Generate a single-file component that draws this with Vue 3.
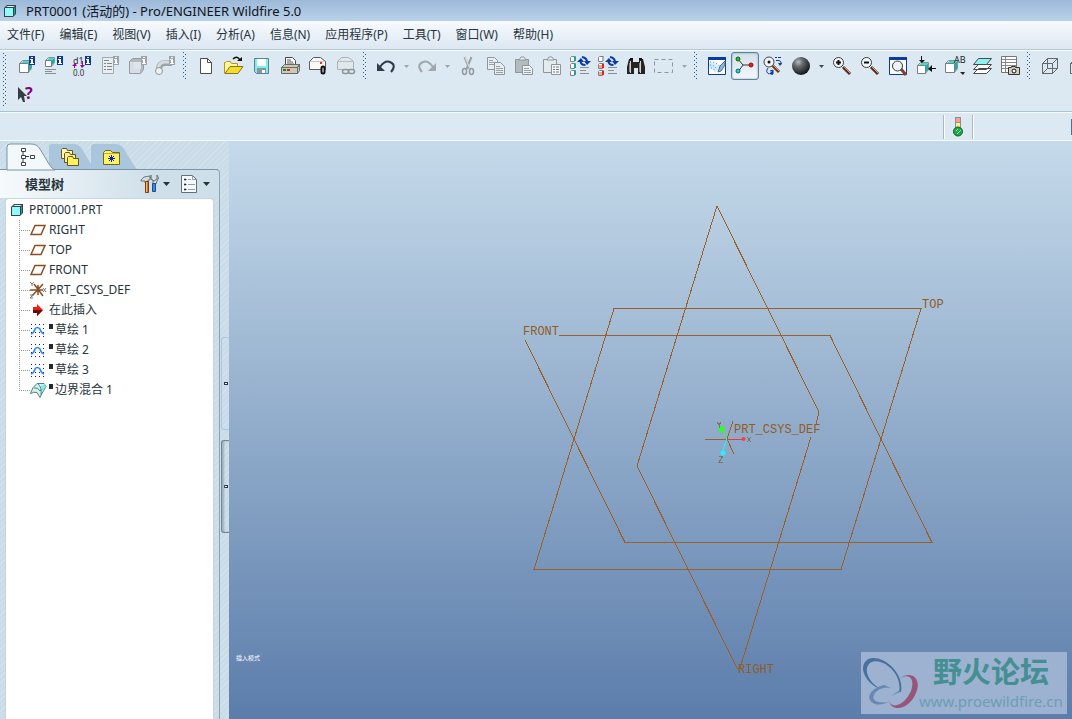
<template>
  <div class="app-window">
    <header class="title-bar">
      <svg class="title-icon" width="16" height="16" viewBox="0 0 16 16" v-html="icons.part"></svg>
      <h1>PRT0001 (活动的) - Pro/ENGINEER Wildfire 5.0</h1>
    </header>

    <nav class="menu-bar">
      <button v-for="item in menus" :key="item" type="button">{{ item }}</button>
    </nav>

    <div class="toolbars">
      <span class="grip"></span>
      <div class="toolbar-rows">
        <div class="toolbar-row">
          <template v-for="(group, index) in groups" :key="index">
            <span v-if="index > 0" class="grip short"></span>
            <template v-for="tool in group" :key="tool.icon">
              <button
                type="button"
                class="tool"
                :class="{ pressed: pressed === tool.icon }"
                :disabled="tool.off"
                :aria-label="tool.label"
              >
                <svg width="24" height="24" viewBox="0 0 24 24" v-html="icons[tool.icon]"></svg>
              </button>
              <button
                v-if="tool.drop"
                type="button"
                class="drop"
                :disabled="tool.off || tool.drop === 'off'"
                :aria-label="tool.label + '选项'"
              >
                <svg width="5" height="3" viewBox="0 0 5 3"><path d="M0 0h5L2.500 3z" fill="currentColor" /></svg>
              </button>
            </template>
          </template>
        </div>
        <div class="toolbar-row">
          <button type="button" class="tool" aria-label="上下文帮助">
            <svg width="24" height="24" viewBox="0 0 24 24" v-html="icons.help"></svg>
          </button>
        </div>
      </div>
    </div>

    <div class="message-bar">
      <div class="message-area"></div>
      <div class="signal">
        <svg width="12" height="20" viewBox="0 0 12 20">
          <path d="M3 0h6v13H3z" fill="#8f8f8f" />
          <path d="M4 1h4v4H4z" fill="#ff9c9c" />
          <path d="M4 6h4v4H4z" fill="#fff27a" />
          <circle cx="6" cy="14.500" r="4.500" fill="#1fa64a" stroke="#145c2b" />
          <path d="M4 14l2-2M5 17l4-4" stroke="#9be0a5" />
        </svg>
      </div>
      <div class="filter"></div>
    </div>

    <main class="workspace">
      <aside class="navigator">
        <div class="navigator-main">
          <div class="tabs" role="tablist">
            <button
              v-for="tab in tabs"
              :key="tab.icon"
              type="button"
              role="tab"
              class="tab"
              :class="{ active: activeTab === tab.icon }"
              :aria-selected="activeTab === tab.icon"
              :aria-label="tab.label"
              @click="activeTab = tab.icon"
            >
              <svg class="tab-shape" width="48" height="25" viewBox="0 0 48 25">
                <path d="M0 26V3q0-3 3-3h21q6 0 9 5l9 15q3 5 6 6z" />
              </svg>
              <svg class="tab-icon" width="20" height="20" viewBox="0 0 20 20" v-html="icons[tab.icon]"></svg>
            </button>
          </div>
          <section class="tree-panel">
            <div class="tree-header">
              <h2>模型树</h2>
              <button type="button" class="tree-tool" aria-label="设置">
                <svg width="20" height="20" viewBox="0 0 20 20" v-html="icons.settings"></svg>
                <svg width="7" height="4" viewBox="0 0 7 4"><path d="M0 0h7L3.500 4z" fill="#26343f" /></svg>
              </button>
              <button type="button" class="tree-tool" aria-label="显示">
                <svg width="20" height="20" viewBox="0 0 20 20" v-html="icons.show"></svg>
                <svg width="7" height="4" viewBox="0 0 7 4"><path d="M0 0h7L3.500 4z" fill="#26343f" /></svg>
              </button>
            </div>
            <div class="tree">
              <div class="tree-root">
                <svg width="16" height="16" viewBox="0 0 16 16" v-html="icons.part"></svg>
                <span>PRT0001.PRT</span>
              </div>
              <ul>
                <li v-for="node in nodes" :key="node.name">
                  <svg width="18" height="18" viewBox="0 0 18 18" v-html="icons[node.icon]"></svg>
                  <i v-if="node.mark" class="mark"></i>
                  <span>{{ node.name }}</span>
                </li>
              </ul>
            </div>
          </section>
        </div>
        <div class="sashes">
          <button type="button" class="sash" aria-label="展开"></button>
          <button type="button" class="sash raised" aria-label="收起"></button>
        </div>
      </aside>

      <section class="viewport">
        <svg class="model" viewBox="0 0 843 578">
          <g class="planes">
            <path d="M385 167.500H692L612 428.500H305z" />
            <path d="M330 194.500H601L703 401.500H396L296 199" />
            <path d="M582 296L511 527H508L408 325L488 65L590 271L587 283" />
            <path d="M476 298.500h22M498 298l6-18M498 298l7 15" />
          </g>
          <path d="M498 298.500h17" stroke="#ff3038" />
          <path d="M498 298l-5-10" stroke="#2bff2b" />
          <path d="M498 298l-5 14" stroke="#22f4ff" />
          <g class="axis-ends">
            <circle cx="514.500" cy="298" r="2" fill="#f04048" />
            <circle cx="492.500" cy="288" r="3" fill="#2bff2b" />
            <circle cx="494" cy="312" r="2.500" fill="#22f4ff" />
          </g>
          <path d="M518 296l4 5m0-5l-4 5M488 281l2 3 2-3M490 284v3M490 315h4l-4 6h4" class="axis-name" />
          <g class="labels">
            <text x="294" y="194">FRONT</text>
            <text x="693" y="167">TOP</text>
            <text x="505" y="292">PRT_CSYS_DEF</text>
            <text x="509" y="532">RIGHT</text>
          </g>
        </svg>
        <p class="mode">插入模式</p>
        <div class="watermark">
          <svg width="58" height="58" viewBox="0 0 58 58">
            <path d="M40 38C44 16 17-2 6 6C-5 15 9 33 20 35C7 28 2 15 9 9C19 2 42 18 38 38z" fill="#49719f" />
            <path d="M39 24C51 16 61 25 55 39C49 54 31 61 27 45C31 58 45 49 50 37C54 25 49 19 39 24z" fill="#975577" />
            <path d="M23 31C10 34 4 44 12 49C16 52 24 50 27 48C17 50 10 46 13 41C16 35 22 33 30 34z" fill="#6788b1" />
            <path d="M39 36L30 42L39 38z" fill="#6788b1" />
          </svg>
          <div class="watermark-text">
            <strong>野火论坛</strong>
            <span>www.proewildfire.cn</span>
          </div>
        </div>
      </section>
    </main>
  </div>
</template>

<script setup>
import { ref } from 'vue'

const menus = [
  '文件(F)', '编辑(E)', '视图(V)', '插入(I)', '分析(A)',
  '信息(N)', '应用程序(P)', '工具(T)', '窗口(W)', '帮助(H)',
]

const pressed = ref('spin')
const activeTab = ref('tabTree')

const groups = [
  [
    { icon: 'partInfo', label: '模型信息' },
    { icon: 'featInfo', label: '特征信息' },
    { icon: 'dims', label: '切换尺寸' },
    { icon: 'listInfo', label: '特征列表', off: true },
    { icon: 'shellInfo', label: '元件信息', off: true },
    { icon: 'pipeInfo', label: '管道信息', off: true },
  ],
  [
    { icon: 'file', label: '新建' },
    { icon: 'open', label: '打开' },
    { icon: 'save', label: '保存' },
    { icon: 'print', label: '打印' },
    { icon: 'mail', label: '发送邮件' },
    { icon: 'mailLink', label: '发送链接', off: true },
  ],
  [
    { icon: 'undo', label: '撤消', drop: 'off' },
    { icon: 'redo', label: '重做', drop: 'off', off: true },
    { icon: 'cut', label: '剪切', off: true },
    { icon: 'copy', label: '复制', off: true },
    { icon: 'paste', label: '粘贴', off: true },
    { icon: 'pasteSpecial', label: '选择性粘贴', off: true },
    { icon: 'regen', label: '再生' },
    { icon: 'regenList', label: '再生管理器' },
    { icon: 'find', label: '查找' },
    { icon: 'select', label: '选取框', drop: 'off' },
  ],
  [
    { icon: 'repaint', label: '重画' },
    { icon: 'spin', label: '旋转中心' },
    { icon: 'orient', label: '定向模式' },
    { icon: 'shade', label: '外观库', drop: 'on' },
    { icon: 'zoomIn', label: '放大' },
    { icon: 'zoomOut', label: '缩小' },
    { icon: 'refit', label: '重新调整' },
    { icon: 'reorient', label: '重定向' },
    { icon: 'views', label: '已命名的视图' },
    { icon: 'layers', label: '层' },
    { icon: 'viewManager', label: '视图管理器' },
  ],
  [
    { icon: 'wireframe', label: '线框' },
    { icon: 'hidden', label: '隐藏线' },
  ],
]

const tabs = [
  { icon: 'tabTree', label: '模型树' },
  { icon: 'tabFolders', label: '文件夹浏览器' },
  { icon: 'tabFavorites', label: '收藏夹' },
]

const nodes = [
  { icon: 'plane', name: 'RIGHT' },
  { icon: 'plane', name: 'TOP' },
  { icon: 'plane', name: 'FRONT' },
  { icon: 'csys', name: 'PRT_CSYS_DEF' },
  { icon: 'insert', name: '在此插入' },
  { icon: 'sketch', name: '草绘 1', mark: true },
  { icon: 'sketch', name: '草绘 2', mark: true },
  { icon: 'sketch', name: '草绘 3', mark: true },
  { icon: 'blend', name: '边界混合 1', mark: true },
]

// Small "i" flag shared by the information tools
const badge = (color) =>
  `<path d="M15 2h6v9h-6z" fill="${color}"/><path d="M17 3h2v1h-2zM17 5h2v4h1v1h-4V9h1V6h-1V5z" fill="#fff"/>`

const magnifier = (mark) =>
  `<path d="M13 13l7 7" stroke="#5a2c20" stroke-width="3"/><path d="M14 13l6 6" stroke="#d49a78"/>
   <circle cx="8.500" cy="8.500" r="5" fill="#f3f8fb" stroke="#34393d"/><path d="${mark}" fill="none" stroke="#111" stroke-width="2"/>`

// Open box with a light front face and a teal side
const box = (x, y, w) =>
  `<path d="M${x + 0.5} ${y + 3.5}l3-3h${w}v${w - 1}l-3 4z" fill="#fff" stroke="#8a8d8f"/>
   <path d="M${x + w} ${y + 4}l3-3v${w - 1}l-3 3z" fill="#0fb3b0"/>
   <path d="M${x + 2} ${y + 3}l2-2h${w - 1}l-2 2z" fill="#3ed9d6"/>
   <path d="M${x + 0.5} ${y + 3.5}h${w}v${w}h-${w}z" fill="#fff" stroke="#7b7d7f"/>`

// Status boxes and the two circling arrows
const regenIcon = (a, b) =>
  `<path d="M2.500 3.500l1-1h4v4l-1 1h-4zM2.500 10.500l1-1h4v4l-1 1h-4zM2.500 17.500l1-1h4v4l-1 1h-4z" fill="#fff" stroke="#7c8586"/>
   <path d="M6 3h2v4H6z" fill="${a}"/><path d="M6 10h2v4H6zM6 17h2v4H6z" fill="${b}"/>
   <path d="M3 4h3v3H3zM3 11h3v3H3zM3 18h3v3H3z" fill="${b === '#ee1c1c' ? '#ff9d9d' : '#fff'}"/><path d="M3 4h3v3H3z" fill="#fff"/>
   <path d="M9 8l4-4 3 4zM16 7h7l-4 4z" fill="#0b3aa6"/>
   <path d="M12.500 7q0 4 5 4M19 8q0-4-5-5" fill="none" stroke="#0b3aa6" stroke-width="2"/>
   <path d="M12 14.500h9M12 17.500h6M12 20.500h9" transform="translate(0 -1)" stroke="#8b8f92"/>`

const icons = {
  part: `<path d="M2 5l3-3h9v9l-3 3H2z" fill="#3a4448"/><path d="M3 5h8v8H3z" fill="#8ffbfb"/>
    <path d="M4 4l2-1h7l-2 1z" fill="#c9ffff"/><path d="M12 5l1-1v7l-1 1z" fill="#12a5a9"/>`,
  partInfo: `${box(5, 6, 9)}${badge('#0b36a0')}`,
  featInfo: `${box(3, 3, 6)}<path d="M3 15.500h11M3 17.500h7M3 19.500h11" stroke="#8b9093"/>${badge('#0b36a0')}`,
  dims: `<text x="3" y="10" font-size="9" fill="#333">d1</text>${badge('#0b36a0')}
    <path d="M4.500 14v-4M12.500 7v5" stroke="#a000a0"/><path d="M2 12l3-3 2 3zM10 11h5l-3 3z" fill="#a000a0"/>
    <text x="3" y="22" font-size="8" fill="#333">0.0</text>`,
  listInfo: `<path d="M4.500 3.500h11v16h-11z" fill="#e9eef1" stroke="#a2a9ad"/>
    <path d="M6 6.500h5M6 9.500h2m1 0h5M6 12.500h2m1 0h5M6 15.500h2m1 0h5" stroke="#7f888c"/>${badge('#9ca4a8')}`,
  shellInfo: `<path d="M3.500 7.500l3-3h11v11l-3 4h-11z" fill="#b4babc" stroke="#959c9f"/><path d="M4 8h4v7h6v4H4z" fill="#d9dddf"/>
    <path d="M8 8h7v7H8z" fill="#d9e6ed"/>${badge('#9ca4a8')}`,
  pipeInfo: `<path d="M5 16Q5 9 11 9h7" fill="none" stroke="#9da4a7" stroke-width="6"/><path d="M4 15Q5 8 11 8h7" fill="none" stroke="#d7dcde" stroke-width="3"/>
    <circle cx="5" cy="17" r="3.500" fill="#eef1f2" stroke="#90989c"/>${badge('#9ca4a8')}`,
  file: '<path d="M6.500 4.500h7l4 4v11h-11z" fill="#fff" stroke="#4d4d4d"/><path d="M13.500 4.500v4h4" fill="none" stroke="#4d4d4d"/>',
  open: `<path d="M2.500 19.500v-11h1l1-1h4l1 2h6v3" fill="#fff89c" stroke="#b7951e"/><path d="M3 19.500l5-7h13l-5 7z" fill="#f3dc2b" stroke="#8f741c"/>
    <path d="M11 5q4-4 7 1" fill="none" stroke="#111" stroke-width="1.500"/><path d="M15 7h5V3z" fill="#111"/>`,
  save: `<path d="M4.500 4.500h14v15h-12l-2-2z" fill="#7eeff0" stroke="#5b8287"/><path d="M7 5h9v7H7z" fill="#fff"/>
    <path d="M7 14h9v5H7z" fill="#86989c"/><path d="M12 16h3v3h-3z" fill="#fff"/>`,
  print: `<path d="M7.500 12V3.500h7l3 3V12" fill="#fff" stroke="#444"/><path d="M9 6h4M9 8h6M9 10h7" stroke="#555"/>
    <path d="M3.500 13.500l3-3h15l-2 3zM3.500 13.500h16v6h-16zM19.500 13.500l2-3v6l-2 3z" fill="#cbc9b9" stroke="#6a6a64"/>
    <path d="M5 15h3v2H5z" fill="#0b8d28"/><path d="M9 15h3v2H9z" fill="#d42222"/>`,
  mail: `<path d="M3.500 15.500v-8l4-4h7l5 4v8z" fill="#f8f8f6" stroke="#5b5b5b"/><path d="M4 7.500h15" stroke="#c9c9c9"/>
    <path d="M14 8h2v2h-2z" fill="#e43131"/><rect x="15.500" y="12.500" width="3" height="7" rx="1.500" fill="#fff" stroke="#111" stroke-width="2"/>`,
  mailLink: `<path d="M3.500 15.500v-8l4-4h7l5 4v8z" fill="#e0e8ec" stroke="#a9b1b5"/><path d="M4 7.500h15" stroke="#b5bcc0"/>
    <rect x="8.500" y="15.500" width="6" height="4" rx="2" fill="none" stroke="#8c9498" stroke-width="1.500"/><rect x="14.500" y="15.500" width="6" height="4" rx="2" fill="none" stroke="#8c9498" stroke-width="1.500"/>`,
  undo: '<path d="M6 13Q11 6 16 8q7 3 1 10" fill="none" stroke="#2e3b4a" stroke-width="2"/><path d="M3 9v8h8z" fill="#2e3b4a"/>',
  redo: '<path d="M18 13Q13 6 8 8q-7 3-1 10" fill="none" stroke="#a1a8ac" stroke-width="2"/><path d="M21 9v8h-8z" fill="#a1a8ac"/>',
  cut: `<path d="M8.500 3l5 12M15.500 3l-5 12" stroke="#9aa2a6" stroke-width="2"/><path d="M9 3l5 12" stroke="#dde3e6"/>
    <ellipse cx="8.500" cy="17.500" rx="2" ry="3" fill="none" stroke="#929a9e" stroke-width="1.500"/>
    <ellipse cx="15.500" cy="17.500" rx="2" ry="3" fill="none" stroke="#929a9e" stroke-width="1.500"/>`,
  copy: `<path d="M3.500 3.500h7l3 3v9h-10z" fill="#e7edf0" stroke="#8d969b"/><path d="M5 6.500h4M5 8.500h7M5 10.500h7" stroke="#98a1a5"/>
    <path d="M10.500 8.500h6l4 4v8h-10z" fill="#e7edf0" stroke="#8d969b"/><path d="M12 12.500h4M12 14.500h7M12 16.500h7M12 18.500h7" stroke="#98a1a5"/>`,
  paste: `<path d="M3.500 5.500h13v13h-13z" fill="#b3bbbf" stroke="#8d969b"/><path d="M7 6l2-3h3l2 3z" fill="#edf1f3" stroke="#8d969b"/>
    <path d="M10.500 11.500h7l3 3v6h-10z" fill="#edf1f3" stroke="#8d969b"/><path d="M12 14.500h5M12 16.500h7M12 18.500h7" stroke="#98a1a5"/>`,
  pasteSpecial: `<path d="M3.500 5.500h13v13h-13z" fill="#e4ebef" stroke="#8d969b"/><path d="M7 6l2-3h3l2 3z" fill="#edf1f3" stroke="#8d969b"/>
    <path d="M11.500 10.500h9v10h-9z" fill="#f4f6f7" stroke="#8d969b"/><path d="M13 13h2m1 0h3M13 15.500h2m1 0h3M13 18h2m1 0h3" stroke="#727b80"/>`,
  regen: regenIcon('#16a3a3', '#16a3a3'),
  regenList: regenIcon('#aab0b2', '#ee1c1c'),
  find: `<path d="M5 5h4v3h6V5h4l2 8v7h-7v-6h-4v6H3v-7z" fill="#242424"/><path d="M6 4h3v2H6zM15 4h3v2h-3z" fill="#111"/>
    <path d="M6.500 7v12M16.500 7v12" stroke="#d6d4c4"/><path d="M5.500 9v9M15.500 9v9" stroke="#8d8b78"/>`,
  select: '<path d="M2.500 5.500h18v13h-18z" fill="none" stroke="#8b959b" stroke-dasharray="4 3"/>',
  repaint: `<path d="M3.500 3.500h17v17h-17z" fill="#fff" stroke="#0b3aa0"/><path d="M3 3h18v3H3z" fill="#0b3aa0"/>
    <path d="M4 13V9q8-1 11 5l-5 5-3-4z" fill="#d6ecff"/><path d="M5 8q7 0 10 5M5 11q5 0 7 5M6 14q3 0 4 4" fill="none" stroke="#1c6fe0" stroke-dasharray="1 2"/>
    <path d="M20 7l-5 5-2 6 3-1 4-6z" fill="#8fb9d6" stroke="#3f6f96"/>`,
  spin: `<path d="M5 5l5 6h10M10 11l-5 7" fill="none" stroke="#30383d"/><circle cx="5" cy="5" r="2" fill="#17c929" stroke="#0b6417"/>
    <circle cx="18" cy="11" r="2" fill="#f31f24" stroke="#811"/><circle cx="5" cy="17" r="2" fill="#1bd6df" stroke="#066a70"/>`,
  orient: `<path d="M11 11l7 7" stroke="#713a20" stroke-width="3"/><path d="M12 11l6 6" stroke="#d49a78"/>
    <circle cx="8" cy="8" r="5" fill="#eef5f8" stroke="#444"/><circle cx="8" cy="8" r="1.500" fill="#111"/>
    <path d="M14 3.500h2m1 0h3M15 6.500h3q3 1 2 4M7 14q-3 4 1 6M9 17l3-1v4" fill="none" stroke="#1239a8"/><path d="M17 9h4l-2 3zM8 20l4-4v5z" fill="#1239a8"/>`,
  shade: `<defs><radialGradient id="ball" cx="35%" cy="28%" r="75%"><stop offset="0" stop-color="#b9bdbf"/><stop offset=".35" stop-color="#65696c"/><stop offset="1" stop-color="#111416"/></radialGradient></defs>
    <circle cx="12" cy="12" r="9" fill="url(#ball)"/>`,
  zoomIn: magnifier('M6 8.500h5M8.500 6v5'),
  zoomOut: magnifier('M6 8.500h5'),
  refit: `<path d="M3.500 3.500h17v17h-17z" fill="#fff" stroke="#0b3aa0"/><path d="M3 3h18v3H3z" fill="#0b3aa0"/>
    <path d="M15 15l5 6" stroke="#7a4228" stroke-width="3"/><circle cx="11.500" cy="12" r="5" fill="#edf4f8" stroke="#34393d"/>`,
  reorient: `${box(3, 8, 8)}
    <path d="M7.500 2v5M16 14.500h6" stroke="#111"/><path d="M5 6h6l-3 3zM18 11v7l-4-3z" fill="#111"/>`,
  views: `${box(3, 6, 9)}
    <text x="12" y="9" font-size="9" fill="#222">AB</text><path d="M18 18h5l-2 3z" fill="#222"/>`,
  layers: `<path d="M3.500 19.500l5-5h13l-5 5zM3.500 15.500l5-5h13l-5 5z" fill="#fff" stroke="#4a4a4a"/><path d="M3.500 10.500l5-6h13l-5 6z" fill="#8ff2f2" stroke="#4a4a4a"/>`,
  viewManager: `<path d="M3.500 2.500h15v16h-15z" fill="#fff" stroke="#777"/><path d="M4 5.500h14M4 8.500h14M4 11.500h14M4 14.500h14M7.500 3v15" stroke="#888"/>
    <path d="M10.500 13.500h3v-1h4v1h4v7h-11z" fill="#d4d1bd" stroke="#34342f"/><circle cx="16" cy="17" r="2" fill="#fff" stroke="#111"/>`,
  wireframe: '<path d="M4.500 9.500h10v10h-10zM9.500 4.500h10v10h-10zM4.500 9.500l5-5M14.500 9.500l5-5M4.500 19.500l5-5M14.500 19.500l5-5" fill="none" stroke="#666"/>',
  hidden: '<path d="M4.500 9.500h10v10h-10zM4.500 9.500l5-5h10v10l-5 5M14.500 9.500l5-5" fill="none" stroke="#666"/>',
  help: `<path d="M4 5v13l3-3 2 5h2l-1-6h3z" fill="#333d43"/><text x="11" y="17" font-size="16" font-weight="bold" fill="#820082">?</text>`,
  tabTree: '<path d="M5 5v10M5 9.500h6" stroke="#3c4347"/><path d="M3.500 1.500h4v3h-4zM3.500 8.500h4v3h-4zM3.500 15.500h4v3h-4zM12.500 8.500h4v3h-4z" fill="#fff" stroke="#3c4347"/>',
  tabFolders: `<path d="M1.500 11.500v-9l1-1h4l1 2h5v8z" fill="#fff9b0" stroke="#5f5530"/><path d="M4.500 15.500v-9l1-1h4l1 2h5v8z" fill="#fff27a" stroke="#5f5530"/>
    <path d="M7.500 18.500v-8l1-1h4l1 2h5v7z" fill="#fff05c" stroke="#5f5530"/>`,
  tabFavorites: `<path d="M1.500 17.500v-12l2-2h5l2 2h7v12z" fill="#fff35d" stroke="#6b6534"/><path d="M2 6.500h15" stroke="#c7ad2c"/>
    <path d="M6 11.500h7M9.500 8v7M7 9l5 5M12 9l-5 5" stroke="#0b1fb5"/>`,
  settings: `<path d="M1 6l3-3 6-1v4H8v3H5V7H1z" fill="#d4dcdc" stroke="#6d7a7b"/><path d="M5.500 7.500h3v11h-3z" fill="#d07a22" stroke="#7a3e12"/>
    <path d="M6 8h1v10H6z" fill="#f4bb62"/><path d="M11 1v4l3 2 3-2V1q3 3 0 6l-1 3h-3V7q-4-3-2-6z" fill="#d4dadc" stroke="#6a7678"/><path d="M12.500 9.500h3v8h-3z" fill="#3a86dc" stroke="#1d4f95"/>`,
  show: `<path d="M1.500 1.500h11l4 4v13h-15z" fill="#f5fafc" stroke="#617078"/><path d="M12.500 1.500v4h4M4 5.500h3m1 0h3M4 10.500h3m1 0h7M4 15.500h3m1 0h7" fill="none" stroke="#8f9ea6"/>
    <circle cx="5" cy="5.500" r="1" fill="#222"/><circle cx="5" cy="10.500" r="1" fill="#222"/><circle cx="5" cy="15.500" r="1" fill="#222"/>`,
  plane: '<path d="M2 13.500l4-9h10l-4 9z" fill="none" stroke="#8a4d20" stroke-width="1.500"/>',
  csys: `<path d="M3 15L14 3M5 3l9 12M1 9h13M9 4v10" stroke="#8a4d20" stroke-width="1.500"/>
    <path d="M1 1l2 2 2-2M3 3v2M14 7l3 4m0-4l-3 4M1 14h3l-3 3h3" fill="none" stroke="#777"/>`,
  insert: '<path d="M4 6h4V3l6 6-6 6v-3H4z" fill="#f21b16"/><path d="M4 9h10l-6 6v-3H4z" fill="#6b0906"/>',
  sketch: `<path d="M2 3.500h14M2 7.500h14M2 11.500h14M2 15.500h14" stroke="#17178c" stroke-dasharray="1 3"/>
    <path d="M2 13q3-1 4-5 2-3 5 0 1 4 4 5" fill="none" stroke="#2787ff" stroke-width="1.500"/>`,
  blend: `<path d="M1.500 12.500Q3 6 8 2.500h7l2 3-4 7-2 4-3-5q-4-1-6 1z" fill="#d9f0ec" stroke="#56807b"/>
    <path d="M5 7q4-1 6 3l6-5M9 3q4 3 3 11" fill="none" stroke="#2a918a"/><path d="M12 5l4-2 1 3-4 3z" fill="#7feaea"/>`,
}
</script>

<style>
html,
body,
#app {
  height: 100%;
}

body {
  margin: 0;
}
</style>

<style scoped>
.app-window {
  min-height: 100%;
  display: flex;
  flex-direction: column;
  overflow: hidden;
  background: #dce9f2;
  color: #27343c;
  font-family: "Noto Sans", "Noto Sans CJK SC", sans-serif;
  font-size: 12px;
  line-height: 20px;
}

button {
  padding: 0;
  border: 0;
  background: none;
  color: inherit;
  font: inherit;
}

svg {
  display: block;
  flex-shrink: 0;
}

h1,
h2,
p,
ul {
  margin: 0;
  padding: 0;
  font-size: 12px;
}

.title-bar {
  height: 21px;
  display: flex;
  align-items: center;
  gap: 8px;
  padding-left: 2px;
  background: linear-gradient(#9db9d9, #b9d1ea);
}

.title-bar h1 {
  font-size: 13px;
  font-weight: 400;
  color: #101418;
}

.menu-bar {
  height: 28px;
  display: flex;
  align-items: center;
  gap: 15px;
  padding-left: 7px;
  background: linear-gradient(#f7fafd, #dce7f2);
  white-space: nowrap;
}

/* Toolbars */
.toolbars {
  display: flex;
  padding: 1px 0 3px;
  border-top: 1px solid #b5c9d5;
  box-shadow: inset 0 1px #f7fbfd;
  overflow: hidden;
}

.toolbar-rows {
  flex: 1;
  min-width: 0;
  padding-top: 1px;
}

.toolbar-row {
  display: flex;
}

.grip {
  width: 12px;
  flex-shrink: 0;
  margin: 2px 0;
  background:
    linear-gradient(#2f5f83 1px, transparent 1px) 3px 0 / 1px 4px repeat-y,
    linear-gradient(#2f5f83 1px, transparent 1px) 5px 2px / 1px 4px repeat-y;
}

.grip.short {
  margin: 0;
}

.tool {
  width: 28px;
  height: 28px;
  flex-shrink: 0;
  display: flex;
  align-items: center;
  justify-content: center;
}

.tool.pressed {
  border: 1px solid #5d83a0;
  border-radius: 3px;
  background: linear-gradient(#d3dfe8, #f4f8fb);
  box-shadow: inset 0 0 2px #7894a8;
}

.drop {
  width: 13px;
  flex-shrink: 0;
  display: flex;
  align-items: center;
  justify-content: center;
  color: #3c4a54;
}

.drop:disabled {
  color: #9ba6ae;
}

/* Message line */
.message-bar {
  height: 28px;
  display: flex;
  border-top: 1px solid #a9c3d3;
  border-bottom: 1px solid #f5fafc;
  box-shadow: inset 0 1px #f7fbfd;
}

.message-area {
  flex: 1;
}

.signal {
  width: 28px;
  margin: 3px 0 1px;
  display: flex;
  align-items: center;
  justify-content: center;
  border-left: 1px solid #aab7c2;
  border-right: 1px solid #aab7c2;
  box-shadow: inset 1px 0 #fff, 1px 0 #fff;
}

.filter {
  width: 98px;
  margin: 7px 0 5px;
  border-right: 1px solid #4f7286;
}

/* Navigator */
.workspace {
  flex: 1;
  display: flex;
  min-height: 0;
}

.navigator {
  width: 229px;
  flex-shrink: 0;
  display: flex;
  background: repeating-linear-gradient(135deg, #c9dce8 0 3px, #d3e2ec 3px 4px);
}

.navigator-main {
  flex: 1;
  display: flex;
  flex-direction: column;
}

.tabs {
  display: flex;
  padding: 3px 0 0 7px;
}

.tab {
  width: 42px;
  height: 25px;
  display: grid;
}

.tab-shape,
.tab-icon {
  grid-area: 1 / 1;
}

.tab-shape {
  overflow: visible;
  fill: #a9c6dc;
}

.tab.active {
  z-index: 1;
}

.tab.active .tab-shape {
  fill: #f3f8fb;
  stroke: #7895a5;
}

.tab-icon {
  margin: 3px 0 0 11px;
}

.tree-panel {
  flex: 1;
  display: flex;
  flex-direction: column;
  padding: 0 5px;
  border-top: 1px solid #7895a5;
  border-right: 1px solid #8ca3b1;
  border-top-right-radius: 4px;
  background: linear-gradient(90deg, #f6fafc, #cfdfe9 70%) top / 100% 28px no-repeat;
}

.tree-header {
  height: 28px;
  display: flex;
  align-items: center;
  padding: 0 4px 0 20px;
  gap: 10px;
}

.tree-header h2 {
  flex: 1;
  font-size: 13px;
  font-weight: 700;
}

.tree-tool {
  display: flex;
  align-items: center;
  gap: 3px;
}

.tree {
  flex: 1;
  padding: 1px 0 0 3px;
  border: 1px solid #c3d6e2;
  border-bottom: 0;
  border-radius: 4px 4px 0 0;
  background: #fff;
}

.tree-root {
  height: 20px;
  display: flex;
  align-items: center;
  gap: 4px;
}

.tree ul {
  padding-left: 10px;
  list-style: none;
}

.tree li {
  height: 20px;
  display: flex;
  align-items: center;
  gap: 2px;
  background:
    repeating-linear-gradient(#999 0 1px, transparent 1px 2px) 0 0 / 1px 100% no-repeat,
    repeating-linear-gradient(90deg, #999 0 1px, transparent 1px 2px) 0 10px / 11px 1px no-repeat;
}

.tree li:last-child {
  background-size: 1px 11px, 11px 1px;
}

.tree li svg {
  margin-left: 10px;
}

.mark {
  width: 4px;
  height: 5px;
  margin-bottom: 8px;
  background: #1f2a33;
}

.sashes {
  width: 9px;
  display: flex;
  flex-direction: column;
  align-items: flex-end;
  justify-content: center;
  gap: 10px;
  padding-top: 10px;
}

.sash {
  width: 8px;
  height: 93px;
  border: 1px solid #a3cae0;
  border-right: 0;
  border-radius: 3px 0 0 3px;
  background: radial-gradient(circle at 4px 50%, #fff 0 1px, #27343c 1px 2px, transparent 2px);
}

.sash.raised {
  border-color: #728690;
  box-shadow: inset 2px 0 2px #a0b0b9;
}

/* Graphics area */
.viewport {
  flex: 1;
  position: relative;
  min-width: 0;
  background: linear-gradient(#c5daea, #5c7dab);
}

.model {
  width: 100%;
  height: 100%;
  shape-rendering: crispEdges;
}

.planes path {
  fill: none;
  stroke: #9a6027;
}

.axis-ends {
  shape-rendering: auto;
}

.axis-name {
  fill: none;
  stroke: #7f746c;
}

.labels {
  fill: #925b25;
  font-family: "Liberation Mono", monospace;
  font-size: 12px;
}

.mode {
  position: absolute;
  left: 7px;
  bottom: 51px;
  color: #fff;
  font-size: 6px;
  line-height: 20px;
}

.watermark {
  position: absolute;
  right: 5px;
  bottom: 5px;
  width: 206px;
  height: 62px;
  display: flex;
  align-items: center;
  background: #9db1d0;
}

.watermark-text {
  display: flex;
  flex-direction: column;
  align-items: center;
}

.watermark strong {
  color: #438f91;
  font-family: "Liberation Sans", "Noto Sans CJK SC", sans-serif;
  font-size: 29px;
  line-height: 36px;
}

.watermark span {
  color: #6a9fb7;
  font-size: 15px;
  line-height: 20px;
}
</style>
